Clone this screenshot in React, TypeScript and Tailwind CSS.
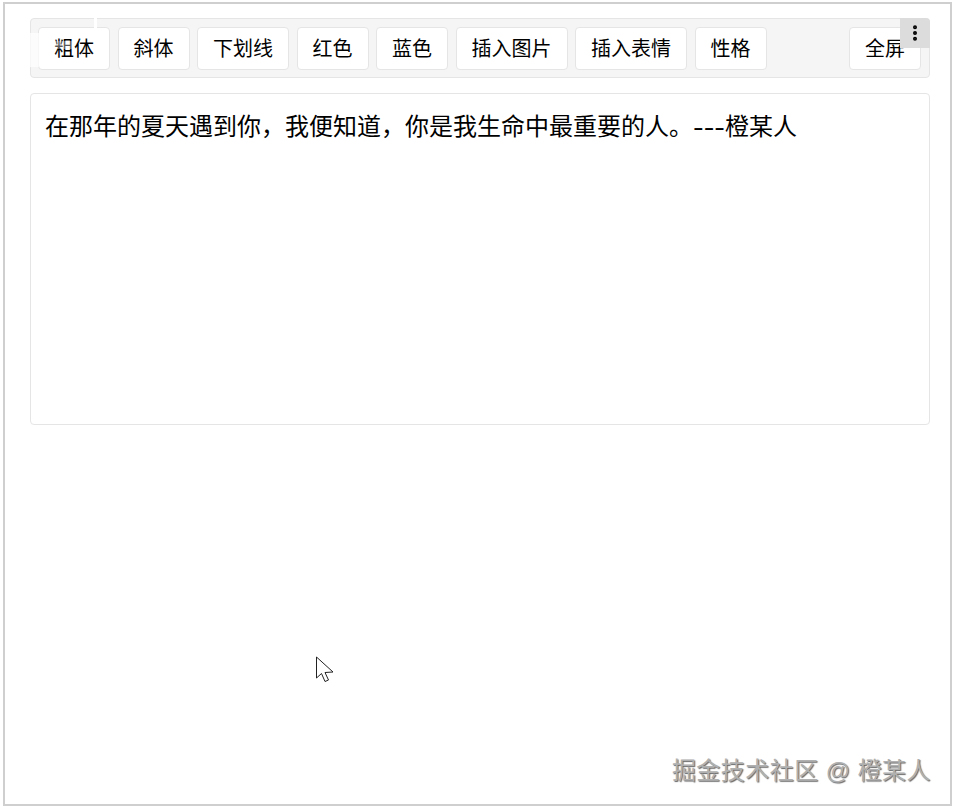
import { EllipsisVertical } from 'lucide-react';

const tools = ['粗体', '斜体', '下划线', '红色', '蓝色', '插入图片', '插入表情', '性格'];

function ToolButton({ label }: { label: string }) {
  return (
    <button className="h-[43px] shrink-0 rounded-[4px] border border-[#e5e5e5] bg-white px-[15px] pt-[2px] text-[20px] leading-none text-black">
      {label}
    </button>
  );
}

export default function App() {
  return (
    <div className="relative h-[807px] w-[954px] overflow-hidden bg-white pt-[2px] pr-[2px] pb-[1px] pl-[3px] font-['Liberation_Sans','Noto_Sans_CJK_SC',sans-serif]">
      <div className="h-full w-full border-[2px] border-[#cfcfcf] pt-[14px] pr-[20px] pl-[25px]">
        {/* toolbar */}
        <div className="relative flex h-[60px] items-center gap-[7.5px] rounded-[4px] border border-[#e5e5e5] bg-[#f5f5f5] pr-[8px] pl-[7px]">
          {tools.map((t) => (
            <ToolButton key={t} label={t} />
          ))}
          <div className="ml-auto">
            <ToolButton label="全屏" />
          </div>
          <div className="absolute -top-px -right-px flex h-[30px] w-[30px] items-center justify-center rounded-tr-[4px] bg-[#dcdcdc]">
            <EllipsisVertical size={20} strokeWidth={2.8} className="text-black" />
          </div>
          {/* smudge left by the recording over the first button */}
          <div className="absolute top-[14px] -left-px h-[34px] w-[9px] bg-white/70" />
          <div className="absolute -top-px left-[63px] h-[10px] w-[3px] bg-white" />
          <div className="absolute top-[22px] left-[23px] h-[8px] w-[18px] bg-white/35" />
        </div>

        {/* editor */}
        <div className="mt-[15px] h-[332px] rounded-[4px] border border-[#e5e5e5] bg-white px-[14px] pt-[16px] text-[24px] leading-[34px] text-black">
          在那年的夏天遇到你，我便知道，你是我生命中最重要的人。<span className="inline-block w-[32px] origin-left scale-x-[1.333]">---</span>橙某人
        </div>
      </div>

      {/* mouse pointer */}
      <svg className="absolute top-[656px] left-[315px]" width="20" height="28" viewBox="0 0 20 28">
        <path d="M1.5 1 L1.5 22 L6.5 17.5 L10 25.5 L13.5 24 L10 16.5 L18 16 Z" fill="white" stroke="#222" strokeWidth="1" />
      </svg>

      {/* watermark */}
      <div className="absolute right-[23px] bottom-[21px] text-[24px] leading-[30px] tracking-[0.45px] text-[#b0b0b0] [text-shadow:1px_1px_1px_#666]">
        掘金技术社区 @ 橙某人
      </div>
    </div>
  );
}
